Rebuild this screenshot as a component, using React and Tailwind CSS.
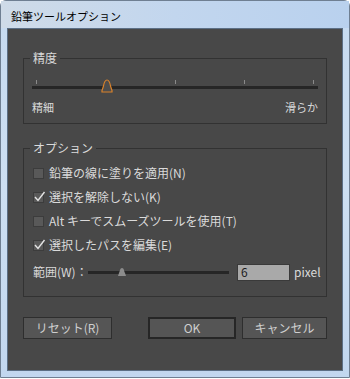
import React from 'react';

const font = { fontFamily: '"Noto Sans CJK JP", "Noto Sans", sans-serif' };

// Small check box as drawn by the dialog (flat grey square, light tick when on)
const CheckRow = ({ checked, label }) => (
  <div className="flex items-center h-[24px] pl-[9px]">
    <div className="relative w-[11px] h-[11px] bg-[#595959] border border-[#3c3c3c]">
      {checked && (
        <svg className="absolute -left-[1px] -top-[3px]" width="13" height="13" viewBox="0 0 13 13">
          <path d="M2 7 L5 10.5 L11.5 2" fill="none" stroke="#e4e4e4" strokeWidth="1.4" />
        </svg>
      )}
    </div>
    <span className="ml-[5px] text-[12px] leading-[16px] text-[#dadada]">{label}</span>
  </div>
);

const Button = ({ children, width, strong }) => (
  <div
    className={`h-[22px] flex items-center justify-center text-[12px] text-[#cfcfcf] bg-[#555555] ${
      strong ? 'border-2 border-[#262626]' : 'border border-[#2e2e2e]'
    } ${width}`}
  >
    {children}
  </div>
);

export default function App() {
  const ticks = [4, 74, 143, 212, 281];

  return (
    <div className="w-[350px] h-[379px] bg-white" style={font}>
      <div className="w-[350px] h-[378px] flex flex-col rounded-t-[6px] border border-[#6f7f92] bg-gradient-to-b from-[#c6daf0] via-[#cddff2] to-[#c2d7ef]">
        {/* title bar */}
        <div className="h-[27px] flex items-center pl-[10px] pt-[3px] bg-gradient-to-r from-[#cfdbe8] via-[#c2d6ee] to-[#b9d1ee]">
          <span className="text-[11px] leading-[14px] text-black">鉛筆ツールオプション</span>
        </div>

        {/* dialog body */}
        <div className="mx-[6px] mb-[6px] flex-1 border border-[#5c6f85] bg-[#484848] px-[15px] pt-[21px]">
          {/* 精度 */}
          <fieldset className="border border-[#323232] px-[8px] pb-[8px]">
            <legend className="-ml-[2px] px-[3px] text-[12px] leading-[16px] text-[#dadada]">精度</legend>
            <div className="relative mt-[14px] h-[12px]">
              {ticks.map((x) => (
                <div key={x} className="absolute top-0 w-[1px] h-[4px] bg-[#8a8a8a]" style={{ left: x }} />
              ))}
              <div className="absolute left-0 right-0 top-[6px] h-[3px] bg-[#262626]" />
              <svg className="absolute left-[69px] -top-[1px]" width="12" height="14" viewBox="0 0 12 14">
                <path d="M6 1 C3.5 1 3 4 2.5 7 L1 11.5 L1 13 L11 13 L11 11.5 L9.5 7 C9 4 8.5 1 6 1 Z" fill="#4d4d4d" stroke="#d9822b" strokeWidth="1.2" />
              </svg>
            </div>
            <div className="mt-[7px] flex justify-between text-[11px] leading-[16px] text-[#dadada]">
              <span>精細</span>
              <span>滑らか</span>
            </div>
          </fieldset>

          {/* オプション */}
          <fieldset className="mt-[16px] border border-[#323232] pb-[12px]">
            <legend className="ml-[6px] px-[3px] text-[12px] leading-[16px] text-[#dadada]">オプション</legend>
            <div className="mt-[5px]">
              <CheckRow checked={false} label="鉛筆の線に塗りを適用(N)" />
              <CheckRow checked label="選択を解除しない(K)" />
              <CheckRow checked={false} label="Alt キーでスムーズツールを使用(T)" />
              <CheckRow checked label="選択したパスを編集(E)" />
              <div className="mt-[3px] flex items-center h-[24px] pl-[9px]">
                <span className="w-[55px] text-[12px] leading-[16px] text-[#dadada] whitespace-nowrap">範囲(W)：</span>
                <div className="relative w-[141px] h-[10px]">
                  <div className="absolute left-0 right-0 top-[4px] h-[3px] bg-[#262626]" />
                  <svg className="absolute left-[29px] top-0" width="10" height="10" viewBox="0 0 10 10">
                    <path d="M5 1 C3 1 3 4 2 6 L1 9 L9 9 L8 6 C7 4 7 1 5 1 Z" fill="#8c8c8c" />
                  </svg>
                </div>
                <div className="ml-[8px] w-[53px] h-[17px] bg-[#a9a9a9] border border-[#3a3a3a] flex items-center pl-[3px] text-[12px] text-[#1c1c1c]">
                  6
                </div>
                <span className="ml-[4px] text-[12px] leading-[16px] text-[#dadada]">pixel</span>
              </div>
            </div>
          </fieldset>

          {/* buttons */}
          <div className="mt-[20px] flex">
            <Button width="w-[89px]">リセット(R)</Button>
            <div className="ml-auto flex gap-[6px]">
              <Button width="w-[88px]" strong>OK</Button>
              <Button width="w-[85px]">キャンセル</Button>
            </div>
          </div>
        </div>
      </div>
    </div>
  );
}
